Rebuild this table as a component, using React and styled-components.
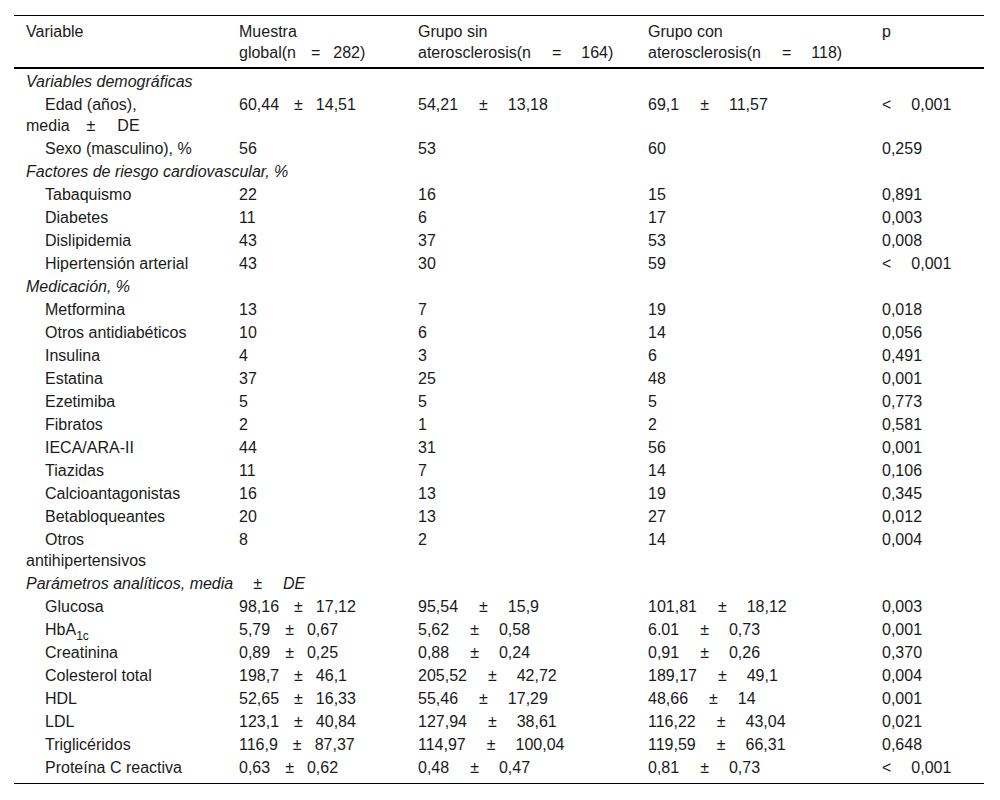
import React from "react";
import styled, { createGlobalStyle } from "styled-components";

const Global = createGlobalStyle`
  html, body { margin: 0; padding: 0; background: #fff; }
  body { font-family: "Liberation Sans", Arial, sans-serif; color: #1a1a1a; }
`;

const Page = styled.div`
  padding: 15px 16px 0 14px;
`;

const Table = styled.table`
  width: 970px;
  table-layout: fixed;
  border-collapse: collapse;
  font-size: 16px;
  line-height: 21px;
  border-top: 1px solid #000;
  border-bottom: 1px solid #000;
`;

const Col = styled.col`
  width: ${(p) => p.$w}px;
`;

const HeadRow = styled.tr`
  border-bottom: 2px solid #000;
`;

const Op = styled.span`
  display: inline-block;
  margin: 0 ${(p) => p.$r ?? 17}px 0 ${(p) => p.$l ?? 18}px;
`;

const spacing = {
  narrow: [15, 13],
  wide: [21, 20],
};

const opRule = (p) =>
  p.$sp
    ? `& ${Op} { margin-left: ${spacing[p.$sp][0]}px; margin-right: ${spacing[p.$sp][1]}px; }`
    : "";

const Th = styled.th`
  text-align: left;
  font-weight: normal;
  vertical-align: top;
  white-space: nowrap;
  padding: 5px 12px 4px 12px;
  ${opRule}
`;

const Tr = styled.tr`
  &:last-child td { padding-bottom: 5px; }
`;

const Td = styled.td`
  vertical-align: top;
  white-space: nowrap;
  padding: 2px 12px 0 12px;
  text-align: left;
  ${opRule}
`;

const Label = styled(Td)`
  padding-left: 31px;
`;

const Wrap = styled.span`
  margin-left: -19px;
`;

const Section = styled.td`
  font-style: italic;
  padding: 2px 12px 0 12px;
`;

const Sub = styled.sub`
  font-size: 12px;
  line-height: 0;
  vertical-align: -5px;
`;

const pm = (a, b) => (
  <>
    {a}
    <Op>±</Op>
    {b}
  </>
);
const lt = (v) => (
  <>
    <Op $l={0} $r={20}>&lt;</Op>
    {v}
  </>
);

const rows = [
  { section: "Variables demográficas" },
  {
    label: (
      <>
        Edad (años),
        <br />
        <Wrap>
          media<Op $l={17} $r={22}>±</Op>DE
        </Wrap>
      </>
    ),
    v: [pm("60,44", "14,51"), pm("54,21", "13,18"), pm("69,1", "11,57"), lt("0,001")],
  },
  { label: "Sexo (masculino), %", v: ["56", "53", "60", "0,259"] },
  { section: "Factores de riesgo cardiovascular, %" },
  { label: "Tabaquismo", v: ["22", "16", "15", "0,891"] },
  { label: "Diabetes", v: ["11", "6", "17", "0,003"] },
  { label: "Dislipidemia", v: ["43", "37", "53", "0,008"] },
  { label: "Hipertensión arterial", v: ["43", "30", "59", lt("0,001")] },
  { section: "Medicación, %" },
  { label: "Metformina", v: ["13", "7", "19", "0,018"] },
  { label: "Otros antidiabéticos", v: ["10", "6", "14", "0,056"] },
  { label: "Insulina", v: ["4", "3", "6", "0,491"] },
  { label: "Estatina", v: ["37", "25", "48", "0,001"] },
  { label: "Ezetimiba", v: ["5", "5", "5", "0,773"] },
  { label: "Fibratos", v: ["2", "1", "2", "0,581"] },
  { label: "IECA/ARA-II", v: ["44", "31", "56", "0,001"] },
  { label: "Tiazidas", v: ["11", "7", "14", "0,106"] },
  { label: "Calcioantagonistas", v: ["16", "13", "19", "0,345"] },
  { label: "Betabloqueantes", v: ["20", "13", "27", "0,012"] },
  {
    label: (
      <>
        Otros
        <br />
        <Wrap>antihipertensivos</Wrap>
      </>
    ),
    v: ["8", "2", "14", "0,004"],
  },
  {
    section: (
      <>
        Parámetros analíticos, media<Op $l={20} $r={21}>±</Op>DE
      </>
    ),
  },
  { label: "Glucosa", v: [pm("98,16", "17,12"), pm("95,54", "15,9"), pm("101,81", "18,12"), "0,003"] },
  {
    label: (
      <>
        HbA<Sub>1c</Sub>
      </>
    ),
    v: [pm("5,79", "0,67"), pm("5,62", "0,58"), pm("6.01", "0,73"), "0,001"],
  },
  { label: "Creatinina", v: [pm("0,89", "0,25"), pm("0,88", "0,24"), pm("0,91", "0,26"), "0,370"] },
  { label: "Colesterol total", v: [pm("198,7", "46,1"), pm("205,52", "42,72"), pm("189,17", "49,1"), "0,004"] },
  { label: "HDL", v: [pm("52,65", "16,33"), pm("55,46", "17,29"), pm("48,66", "14"), "0,001"] },
  { label: "LDL", v: [pm("123,1", "40,84"), pm("127,94", "38,61"), pm("116,22", "43,04"), "0,021"] },
  { label: "Triglicéridos", v: [pm("116,9", "87,37"), pm("114,97", "100,04"), pm("119,59", "66,31"), "0,648"] },
  { label: "Proteína C reactiva", v: [pm("0,63", "0,62"), pm("0,48", "0,47"), pm("0,81", "0,73"), lt("0,001")] },
];

const colSpacing = ["narrow", "wide", "wide", null];

export default function App() {
  return (
    <Page>
      <Global />
      <Table>
        <colgroup>
          <Col $w={213} />
          <Col $w={179} />
          <Col $w={230} />
          <Col $w={234} />
          <Col $w={114} />
        </colgroup>
        <thead>
          <HeadRow>
            <Th>Variable</Th>
            <Th $sp="narrow">
              Muestra
              <br />
              global(n<Op>=</Op>282)
            </Th>
            <Th $sp="wide">
              Grupo sin
              <br />
              aterosclerosis(n<Op>=</Op>164)
            </Th>
            <Th $sp="wide">
              Grupo con
              <br />
              aterosclerosis(n<Op>=</Op>118)
            </Th>
            <Th>p</Th>
          </HeadRow>
        </thead>
        <tbody>
          {rows.map((r, i) =>
            r.section ? (
              <Tr key={i}>
                <Section colSpan={5}>{r.section}</Section>
              </Tr>
            ) : (
              <Tr key={i}>
                <Label>{r.label}</Label>
                {r.v.map((c, j) => (
                  <Td key={j} $sp={colSpacing[j]}>
                    {c}
                  </Td>
                ))}
              </Tr>
            )
          )}
        </tbody>
      </Table>
    </Page>
  );
}
